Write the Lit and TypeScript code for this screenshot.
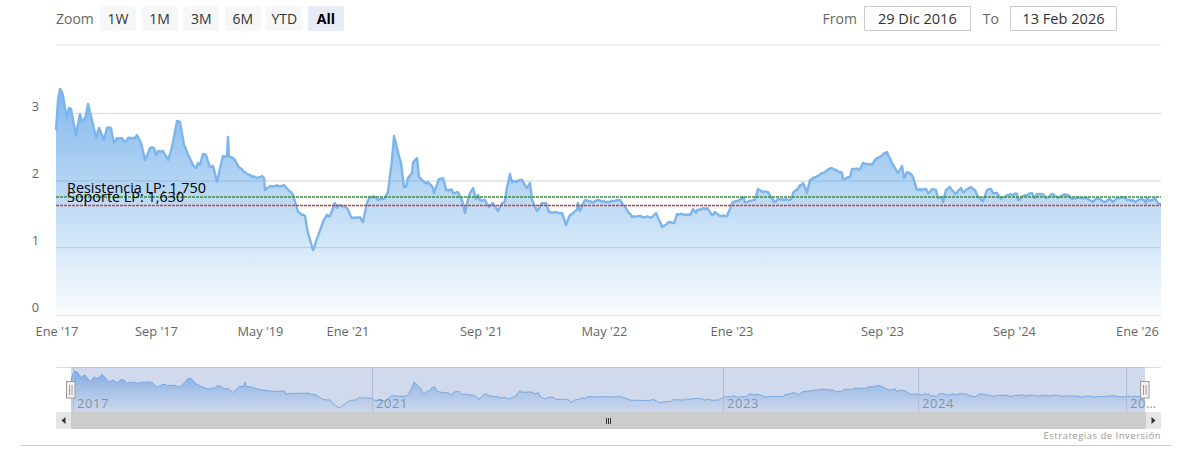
import { LitElement, css, html, svg } from "lit";
import { customElement } from "lit/decorators.js";

// price series, read off the plot in page pixels
const SERIES: [number, number][] = [
  [56,130],[58,100],[60,89],[62,92],[63,96],[65,108],[67,118],[69,108],[71,109],[73,120],[76,135],[78,124],[80,114],[82,122],[85,118],[86,115],[88,104],[90,112],[92,120],[96,138],[99,128],[101,133],[104,140],[107,128],[111,128],[114,143],[117,138],[122,138],[125,142],[128,138],[135,138],[137,135],[141,143],[145,160],[150,148],[154,148],[156,155],[158,151],[163,151],[168,160],[172,147],[177,121],[180,122],[184,145],[187,152],[193,165],[196,168],[198,163],[200,165],[203,154],[206,155],[210,167],[213,166],[217,182],[223,156],[227,156],[228,137],[229,156],[233,158],[240,168],[247,174],[257,178],[262,176],[264,178],[265,190],[270,186],[285,186],[293,195],[298,212],[305,216],[308,233],[313,250],[323,222],[327,215],[330,216],
  [335,203],[337,208],[340,205],[347,208],[352,218],[360,217],[363,222],[367,203],[370,197],[375,197],[378,200],[385,198],[388,192],[392,160],[394,136],[397,148],[401,163],[404,187],[406,187],[408,178],[412,173],[413,163],[417,158],[419,177],[425,183],[428,182],[433,188],[434,193],[439,179],[443,178],[446,190],[452,190],[453,193],[458,192],[462,200],[465,213],[469,195],[473,188],[476,199],[478,195],[480,200],[485,200],[489,207],[493,203],[498,211],[502,203],[505,201],[507,187],[510,174],[512,182],[522,180],[527,188],[530,183],[532,200],[537,211],[542,203],[546,203],[549,212],[562,213],[566,225],[570,215],[577,210],[578,203],[580,211],[585,200],[592,202],[598,200],[605,202],[615,201],[620,200],[625,207],
  [632,217],[638,216],[644,217],[652,217],[656,213],[662,227],[670,222],[674,223],[677,214],[690,215],[693,209],[696,213],[697,210],[707,208],[712,215],[715,212],[720,216],[727,216],[733,202],[738,201],[743,197],[745,202],[755,200],[758,189],[763,192],[768,192],[774,202],[778,199],[788,200],[792,198],[793,193],[803,183],[807,193],[810,180],[823,173],[831,168],[842,173],[843,179],[850,177],[852,169],[860,169],[863,163],[872,165],[875,160],[887,152],[892,163],[898,173],[902,166],[904,178],[907,172],[911,174],[913,177],[917,190],[926,189],[928,193],[933,189],[936,190],[938,198],[942,197],[943,202],[946,190],[950,187],[955,194],[961,188],[963,192],[971,187],[975,190],[978,197],[983,201],[987,190],[991,189],[993,193],[997,193],[1001,199],[1007,195],[1017,194],[1018,200],[1023,196],[1032,193],[1035,198],[1037,194],[1043,194],[1046,198],[1053,194],[1058,198],[1063,195],[1068,195],[1072,199],[1077,198],[1087,198],[1093,202],[1097,198],[1105,202],[1110,199],[1113,202],[1117,198],[1125,197],[1127,200],[1133,200],[1135,202],[1140,199],[1144,200],[1146,203],[1147,198],[1150,201],[1155,198],[1157,202],[1161,204],
];

const RANGES = ["1W", "1M", "3M", "6M", "YTD", "All"];
const Y_LABELS: [string, number][] = [["3", 111], ["2", 178], ["1", 245], ["0", 312]];
const GRID_Y = [113.5, 181, 247.5];
const X_LABELS: [string, number][] = [
  ["Ene '17", 57], ["Sep '17", 156.5], ["May '19", 260.5], ["Ene '21", 348], ["Sep '21", 481.5],
  ["May '22", 604.5], ["Ene '23", 732], ["Sep '23", 882.5], ["Sep '24", 1014.5], ["Ene '26", 1137.5],
];
const NAV_TICKS: [string, number][] = [["2017", 73], ["2021", 372], ["2023", 723], ["2024", 918], ["20…", 1126]];

// the navigator runs on real time, the main axis doesn't, so map piecewise
const NAV_X: [number, number][] = [
  [56, 71], [177, 188], [228, 245], [313, 339], [348, 372], [732, 723], [925, 918], [1137, 1126], [1161, 1145],
];

function navX(x: number) {
  for (let i = 1; i < NAV_X.length; i++) {
    const [a, na] = NAV_X[i - 1];
    const [b, nb] = NAV_X[i];
    if (x <= b) return na + ((x - a) / (b - a)) * (nb - na);
  }
  return 1145;
}

// fills long segments with small daily wobble, the readings above are too sparse
function densify(points: [number, number][]) {
  const out: [number, number][] = [];
  points.forEach(([x, y], i) => {
    if (i > 0) {
      const [px, py] = points[i - 1];
      const steps = Math.floor((x - px) / 1.5);
      for (let s = 1; s < steps; s++) {
        const t = s / steps;
        const qx = px + (x - px) * t;
        const wobble = Math.sin(qx * 2.3) * 0.5 + Math.sin(qx * 0.9 + 1) * 0.4;
        out.push([qx, py + (y - py) * t + wobble]);
      }
    }
    out.push([x, y]);
  });
  return out;
}

const dense = densify(SERIES);
const mainLine = dense.map(([x, y]) => `${x.toFixed(1)},${y.toFixed(1)}`).join(" ");
const mainArea = `56,315.5 ${mainLine} 1161,315.5`;

const navPoints = dense
  .map(([x, y]) => `${navX(x).toFixed(1)},${(371 + (y - 89) * 0.23).toFixed(1)}`)
  .join(" ");
const navArea = `71,412 ${navPoints} 1145,412`;

@customElement("app-root")
export class AppRoot extends LitElement {
  static styles = css`
    :host {
      display: block;
      width: 1192px;
      height: 465px;
      font-family: "Open Sans", "Noto Sans", sans-serif;
      background: #fff;
    }
    .toolbar {
      box-sizing: border-box;
      display: flex;
      height: 46px;
      width: 1105px;
      margin-left: 56px;
      padding-top: 6px;
      border-bottom: 2px solid #eee;
      font-size: 14px;
      line-height: 25px;
    }
    .zoom-label {
      width: 44px;
      color: #666;
    }
    .ranges {
      display: flex;
      gap: 5.6px;
    }
    .range {
      width: 36px;
      height: 25px;
      border-radius: 2px;
      background: #f7f7f7;
      color: #333;
      text-align: center;
    }
    .range.active {
      background: #e6ebf5;
      color: #000;
      font-weight: 700;
    }
    .dates {
      display: flex;
      margin-left: auto;
      margin-right: 44px;
      color: #666;
    }
    .date {
      box-sizing: border-box;
      width: 107px;
      height: 25px;
      margin-left: 7px;
      border: 1px solid #ccc;
      font-size: 14.6px;
      color: #333;
      text-align: center;
      line-height: 23px;
    }
    .to {
      margin-left: 12px;
    }
    .to + .date {
      margin-left: 11px;
    }
    svg {
      display: block;
    }
    .axis {
      font-size: 12.8px;
      fill: #666;
    }
    .flag {
      font-size: 14.4px;
      fill: #000;
    }
    .nav-label {
      font-size: 13px;
      fill: #999;
      letter-spacing: 0.6px;
    }
    .scrollbar {
      display: flex;
      width: 1105px;
      height: 17px;
      margin-left: 56px;
      background: #ccc;
    }
    .arrow {
      flex: none;
      display: flex;
      align-items: center;
      justify-content: center;
      width: 15px;
      background: #e6e6e6;
    }
    .thumb {
      flex: 1;
      display: flex;
      align-items: center;
      justify-content: center;
      gap: 1px;
    }
    .thumb i {
      width: 1px;
      height: 6px;
      background: #333;
    }
    .credit {
      box-sizing: border-box;
      width: 1161px;
      height: 16px;
      text-align: right;
      font-size: 9.5px;
      line-height: 14px;
      letter-spacing: 0.5px;
      color: #999;
    }
    .rule {
      width: 1152px;
      margin-left: 20px;
      border-top: 1px solid #ccc8dc;
    }
  `;

  private chart() {
    return svg`
      <svg width="1192" height="319" viewBox="0 46 1192 319">
        <defs>
          <linearGradient id="main-fill" gradientUnits="userSpaceOnUse" x1="0" y1="89" x2="0" y2="315.5">
            <stop offset="0" stop-color="#7cb5ec" stop-opacity="0.95"></stop>
            <stop offset="1" stop-color="#7cb5ec" stop-opacity="0.04"></stop>
          </linearGradient>
        </defs>
        ${GRID_Y.map((y) => svg`<line x1="56" x2="1161" y1=${y} y2=${y} stroke="#e6e6e6" stroke-width="1.3"></line>`)}
        <polygon points=${mainArea} fill="url(#main-fill)"></polygon>
        ${GRID_Y.map((y) => svg`<line x1="56" x2="1161" y1=${y} y2=${y} stroke="#000" stroke-opacity="0.03"></line>`)}
        <line x1="56" x2="1161" y1="315.5" y2="315.5" stroke="#e6e6e6"></line>
        <polyline points=${mainLine} fill="none" stroke="#7cb5ec" stroke-width="2.4" stroke-linejoin="round"></polyline>
        <line x1="56" x2="1161" y1="197" y2="197" stroke="#3f8f46" stroke-width="1.7" stroke-dasharray="3 1"></line>
        <line x1="56" x2="1161" y1="205.5" y2="205.5" stroke="#b24a52" stroke-width="1.7" stroke-dasharray="3 1"></line>
        <text class="flag" x="67" y="193">Resistencia LP: 1,750</text>
        <text class="flag" x="67" y="202">Soporte LP: 1,630</text>
        ${Y_LABELS.map(([t, y]) => svg`<text class="axis" x="39" y=${y} text-anchor="end">${t}</text>`)}
        ${X_LABELS.map(([t, x]) => svg`<text class="axis" x=${x} y="336" text-anchor="middle">${t}</text>`)}
      </svg>
    `;
  }

  private navigator() {
    return svg`
      <svg width="1192" height="47" viewBox="0 365 1192 47">
        <defs>
          <linearGradient id="nav-fill" gradientUnits="userSpaceOnUse" x1="0" y1="371" x2="0" y2="412">
            <stop offset="0" stop-color="#6ba6ea" stop-opacity="0.75"></stop>
            <stop offset="1" stop-color="#7cb5ec" stop-opacity="0.04"></stop>
          </linearGradient>
        </defs>
        <line x1="56" x2="1161" y1="367.5" y2="367.5" stroke="#ddd"></line>
        <polygon points=${navArea} fill="url(#nav-fill)"></polygon>
        <polyline points=${navPoints} fill="none" stroke="#7cb5ec" stroke-width="1"></polyline>
        ${NAV_TICKS.map(([t, x]) => svg`
          <line x1=${x + 0.5} x2=${x + 0.5} y1="368" y2="412" stroke="#d2d6e0"></line>
          <text class="nav-label" x=${x + 4} y="408">${t}</text>
        `)}
        <rect x="71" y="367" width="1074" height="45" fill="#6685c2" fill-opacity="0.3"></rect>
        ${[66.5, 1140.5].map((x) => svg`
          <rect x=${x} y="381.5" width="8.5" height="16.5" fill="#f2f2f2" stroke="#999"></rect>
          <line x1=${x + 3} x2=${x + 3} y1="385" y2="395" stroke="#999"></line>
          <line x1=${x + 5.5} x2=${x + 5.5} y1="385" y2="395" stroke="#999"></line>
        `)}
      </svg>
    `;
  }

  render() {
    return html`
      <div class="toolbar">
        <div class="zoom-label">Zoom</div>
        <div class="ranges">
          ${RANGES.map((r) => html`<div class="range ${r === "All" ? "active" : ""}">${r}</div>`)}
        </div>
        <div class="dates">
          <div>From</div>
          <div class="date">29 Dic 2016</div>
          <div class="to">To</div>
          <div class="date">13 Feb 2026</div>
        </div>
      </div>
      ${this.chart()} ${this.navigator()}
      <div class="scrollbar">
        <div class="arrow">
          <svg width="5" height="7" viewBox="0 0 5 7"><path d="M4.5 0V7L0.5 3.5Z" fill="#333"></path></svg>
        </div>
        <div class="thumb"><i></i><i></i><i></i></div>
        <div class="arrow">
          <svg width="5" height="7" viewBox="0 0 5 7"><path d="M0.5 0V7L4.5 3.5Z" fill="#333"></path></svg>
        </div>
      </div>
      <div class="credit">Estrategias de Inversión</div>
      <div class="rule"></div>
    `;
  }
}
